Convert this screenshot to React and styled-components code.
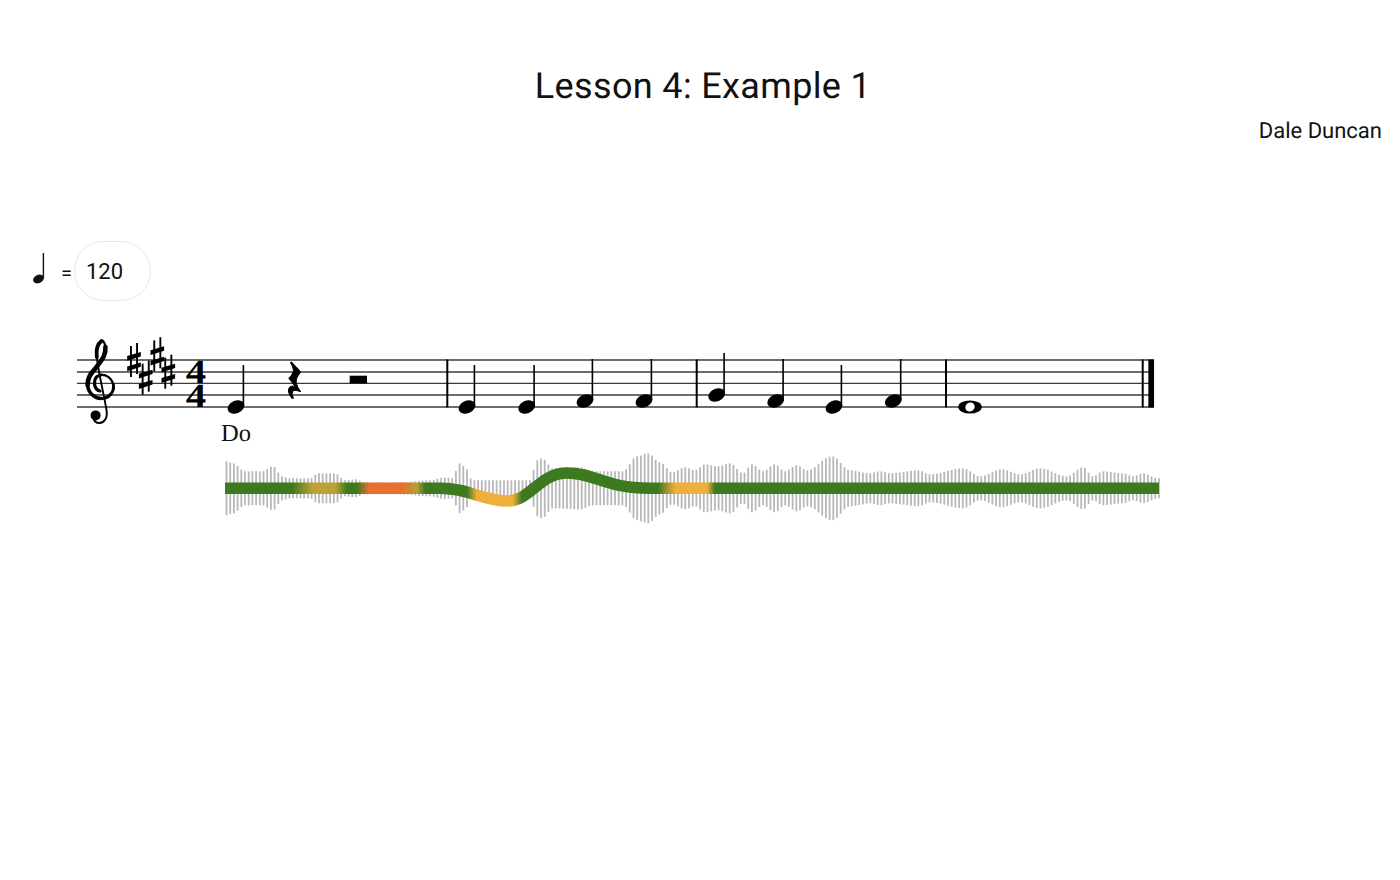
import React from 'react';
import styled, { createGlobalStyle } from 'styled-components';

const GlobalStyle = createGlobalStyle`
  html, body {
    margin: 0;
    background: #ffffff;
    font-family: Roboto, "Liberation Sans", sans-serif;
    text-rendering: geometricPrecision;
  }
`;

const Page = styled.div`
  width: 1400px;
  height: 880px;
  overflow: hidden;
  display: flex;
  flex-direction: column;
`;

const Title = styled.h1`
  margin: 60px 0 0;
  padding-left: 6px;
  font-size: 36px;
  line-height: 52px;
  font-weight: 400;
  letter-spacing: 0.36px;
  text-align: center;
  color: #111111;
`;

const Composer = styled.div`
  margin-top: 8px;
  padding-right: 18px;
  font-size: 22px;
  line-height: 24px;
  text-align: right;
  color: #111111;
`;

const TempoRow = styled.div`
  margin-top: 97px;
  padding-left: 32px;
  height: 60px;
  display: flex;
  align-items: center;
`;

const TempoNote = styled.svg`
  width: 14px;
  height: 34px;
  margin-top: -5px;
  display: block;
`;

const TempoEquals = styled.span`
  margin-left: 15px;
  width: 13px;
  font-size: 20px;
  line-height: 20px;
  margin-top: 4px;
  color: #111111;
`;

const TempoInput = styled.input`
  box-sizing: border-box;
  width: 77px;
  height: 60px;
  padding: 0 11px;
  border: 1px solid #e6e8ea;
  border-radius: 30px;
  outline: none;
  background: #ffffff;
  font-family: inherit;
  font-size: 22px;
  color: #111111;
`;

const Score = styled.svg`
  display: block;
  margin-top: 29px;
  width: 1400px;
  height: 200px;
`;

const StaffLine = styled.line`
  stroke: #3c3c3c;
  stroke-width: 1.3;
`;

const BarLine = styled.line`
  stroke: #000000;
  stroke-width: ${(p) => p.$w || 2};
`;

const Lyric = styled.text`
  font-family: "Liberation Serif", serif;
  font-size: 24.5px;
  fill: #111111;
`;

const TimeDigit = styled.text`
  font-family: "Liberation Serif", serif;
  font-weight: 700;
  font-size: 34px;
  text-anchor: middle;
  fill: #000000;
`;

const Peak = styled.line`
  stroke: #b8b8b8;
  stroke-width: 1.8;
`;

const Ribbon = styled.path`
  fill: none;
  stroke: url(#pitchGradient);
  stroke-width: 11.5;
`;

const STAFF_Y = [360, 372, 383.3, 395, 407];

const NOTES = [
  [236, 407], [467, 407], [526.7, 407], [585, 401], [644, 401],
  [716.7, 395], [775.7, 401], [834, 407], [893.3, 401],
];

const SHARPS = [[134, 360], [145.7, 377.7], [157.3, 354.3], [168.3, 371.7]];

// amplitude of the audio envelope, [x, px from centre]
const ENVELOPE = [
  [226, 27], [233, 25], [245, 17], [262, 17], [273, 22], [282, 12], [290, 10], [310, 10],
  [318, 15], [335, 15], [345, 8], [355, 9], [365, 6], [400, 6], [430, 8], [445, 11],
  [452, 10], [460, 25], [467, 19], [472, 8], [530, 8], [537, 28], [542, 30], [553, 20],
  [580, 21], [593, 17], [623, 17], [637, 32], [648, 35], [660, 26], [672, 16], [685, 21],
  [695, 18], [705, 24], [718, 22], [730, 25], [743, 15], [752, 24], [763, 17], [775, 24],
  [785, 17], [797, 23], [807, 18], [832, 32], [850, 18], [870, 15], [880, 17], [890, 15],
  [918, 18], [930, 14], [963, 20], [980, 12], [1002, 19], [1020, 14], [1040, 20], [1067, 12],
  [1083, 21], [1093, 12], [1103, 17], [1123, 15], [1133, 12], [1143, 15], [1158, 10],
];

const GRADIENT = [
  [225, '#3d7a1f'], [292, '#3d7a1f'], [313, '#bda236'], [335, '#bda236'], [347, '#3d7a1f'],
  [357, '#3d7a1f'], [369, '#e8702f'], [403, '#e8702f'], [417, '#b5a035'], [425, '#3d7a1f'],
  [467, '#3d7a1f'], [477, '#f0ae3a'], [513, '#f0ae3a'], [522, '#3d7a1f'], [658, '#3d7a1f'],
  [675, '#f0ae3a'], [707, '#f0ae3a'], [715, '#3d7a1f'], [1159, '#3d7a1f'],
];

const amplitudeAt = (x) => {
  for (let i = 1; i < ENVELOPE.length; i++) {
    const [x0, a0] = ENVELOPE[i - 1];
    const [x1, a1] = ENVELOPE[i];
    if (x <= x1) {
      const t = (x - x0) / (x1 - x0);
      return a0 + (a1 - a0) * (1 - Math.cos(Math.PI * t)) / 2;
    }
  }
  return 10;
};

const PEAKS = [];
for (let x = 226.5; x < 1159; x += 3.7) PEAKS.push([x, amplitudeAt(x)]);

const Quarter = ({ x, y }) => (
  <g>
    <ellipse cx={x} cy={y} rx="8.8" ry="6.2" transform={`rotate(-24 ${x} ${y})`} fill="#000" />
    <line x1={x + 7.4} y1={y - 1.5} x2={x + 7.4} y2={y - 42} stroke="#000" strokeWidth="1.6" />
  </g>
);

const Sharp = ({ x, y }) => (
  <g fill="#000">
    <rect x={x - 4} y={y - 14} width="1.9" height="31" />
    <rect x={x + 2.1} y={y - 17} width="1.9" height="31" />
    <polygon points={`${x - 6.8},${y - 4} ${x + 6.8},${y - 8} ${x + 6.8},${y - 3.6} ${x - 6.8},${y + 0.8}`} />
    <polygon points={`${x - 6.8},${y + 6.4} ${x + 6.8},${y + 2.4} ${x + 6.8},${y + 6.8} ${x - 6.8},${y + 11.2}`} />
  </g>
);

const TrebleClef = () => (
  <g fill="none" stroke="#000" strokeLinecap="round">
    <path d="M105.4 347 C106.5 356 100 362 95 369 C90 374 87.4 379 87.6 385" strokeWidth="4.6" />
    <path d="M87.6 385 C88 393 95 398.5 101 398.5" strokeWidth="3.6" />
    <path d="M101 398.5 C109 398.5 114.5 392 113.4 385" strokeWidth="3" />
    <path d="M113.4 385 C112 378 106 374.5 101 375" strokeWidth="2.2" />
    <path d="M101 375 C96 375.5 94 380 94.5 384 C95 388 97.5 390.5 100 391" strokeWidth="3.2" />
    <path d="M105.4 347 C105 343 103 340 101.5 341" strokeWidth="2.2" />
    <path d="M101.5 341 C97.5 344 96 350 96.8 357" strokeWidth="3.8" />
    <path d="M96.8 357 C98 370 104 395 106.5 410 C108 418 104 423 99.5 423 C96 423 94 421 93.5 418" strokeWidth="1.9" />
    <circle cx="95.6" cy="415.4" r="5" fill="#000" stroke="none" />
  </g>
);

const QuarterRest = () => (
  <path
    fill="#000"
    stroke="#000"
    strokeWidth="0.9"
    transform="translate(294.5 380) scale(1.12) translate(-294.5 -380)"
    d="M291.8 364 C294 367 298 370 299.8 373 C297 376.5 295.5 379 296 382 C296.5 385 298 388 300 390.5 C296 388.5 293 388.5 292.5 391 C292 392.5 292.5 394 293.5 396 L292.5 396.5 C290 393.5 288.5 390 289.5 387.5 C290.5 385.5 293 385 295.5 386 L289.5 378.5 C292 376 294 373.5 293.5 370.5 C293.2 368.5 292 366 291 364.5 Z"
  />
);

const WholeNote = ({ x, y }) => (
  <g>
    <ellipse cx={x} cy={y} rx="11.8" ry="6.6" fill="#000" />
    <ellipse cx={x} cy={y} rx="4.8" ry="4.4" transform={`rotate(-30 ${x} ${y})`} fill="#fff" />
  </g>
);

export default function App() {
  return (
    <Page>
      <GlobalStyle />
      <Title>Lesson 4: Example 1</Title>
      <Composer>Dale Duncan</Composer>
      <TempoRow>
        <TempoNote viewBox="0 0 14 34">
          <ellipse cx="6.5" cy="27" rx="5.6" ry="4.2" transform="rotate(-24 6.5 27)" fill="#111" />
          <line x1="11.4" y1="1" x2="11.4" y2="26" stroke="#111" strokeWidth="1.4" />
        </TempoNote>
        <TempoEquals>=</TempoEquals>
        <TempoInput defaultValue="120" />
      </TempoRow>
      <Score viewBox="0 330 1400 200">
        {STAFF_Y.map((y) => (
          <StaffLine key={y} x1="77" x2="1154" y1={y} y2={y} />
        ))}
        <TrebleClef />
        {SHARPS.map(([x, y]) => (
          <Sharp key={x} x={x} y={y} />
        ))}
        <TimeDigit transform="translate(196 383) scale(1.2 1)">4</TimeDigit>
        <TimeDigit transform="translate(196 407) scale(1.2 1)">4</TimeDigit>
        {NOTES.map(([x, y]) => (
          <Quarter key={x} x={x} y={y} />
        ))}
        <QuarterRest />
        <rect x="349.7" y="375.7" width="17.3" height="7.7" fill="#000" />
        <WholeNote x={970} y={407} />
        <BarLine x1="447.3" x2="447.3" y1="359.5" y2="407.5" />
        <BarLine x1="696.7" x2="696.7" y1="359.5" y2="407.5" />
        <BarLine x1="946" x2="946" y1="359.5" y2="407.5" />
        <BarLine x1="1142.7" x2="1142.7" y1="359.5" y2="407.5" />
        <BarLine $w={5.7} x1="1151.2" x2="1151.2" y1="359.5" y2="407.5" />
        <Lyric x="221" y="441">Do</Lyric>

        {PEAKS.map(([x, a]) => (
          <Peak key={x} x1={x} x2={x} y1={488.3 - a} y2={488.3 + a} />
        ))}
        <defs>
          <linearGradient id="pitchGradient" gradientUnits="userSpaceOnUse" x1="225" x2="1159" y1="0" y2="0">
            {GRADIENT.map(([x, c]) => (
              <stop key={x} offset={(x - 225) / 934} stopColor={c} />
            ))}
          </linearGradient>
        </defs>
        <Ribbon d="M225 488.3 L440 488.3 C470 488.3 482 501 508 501 C530 501 540 473 567 473 C595 473 605 488.3 650 488.3 L1159 488.3" />
      </Score>
    </Page>
  );
}
